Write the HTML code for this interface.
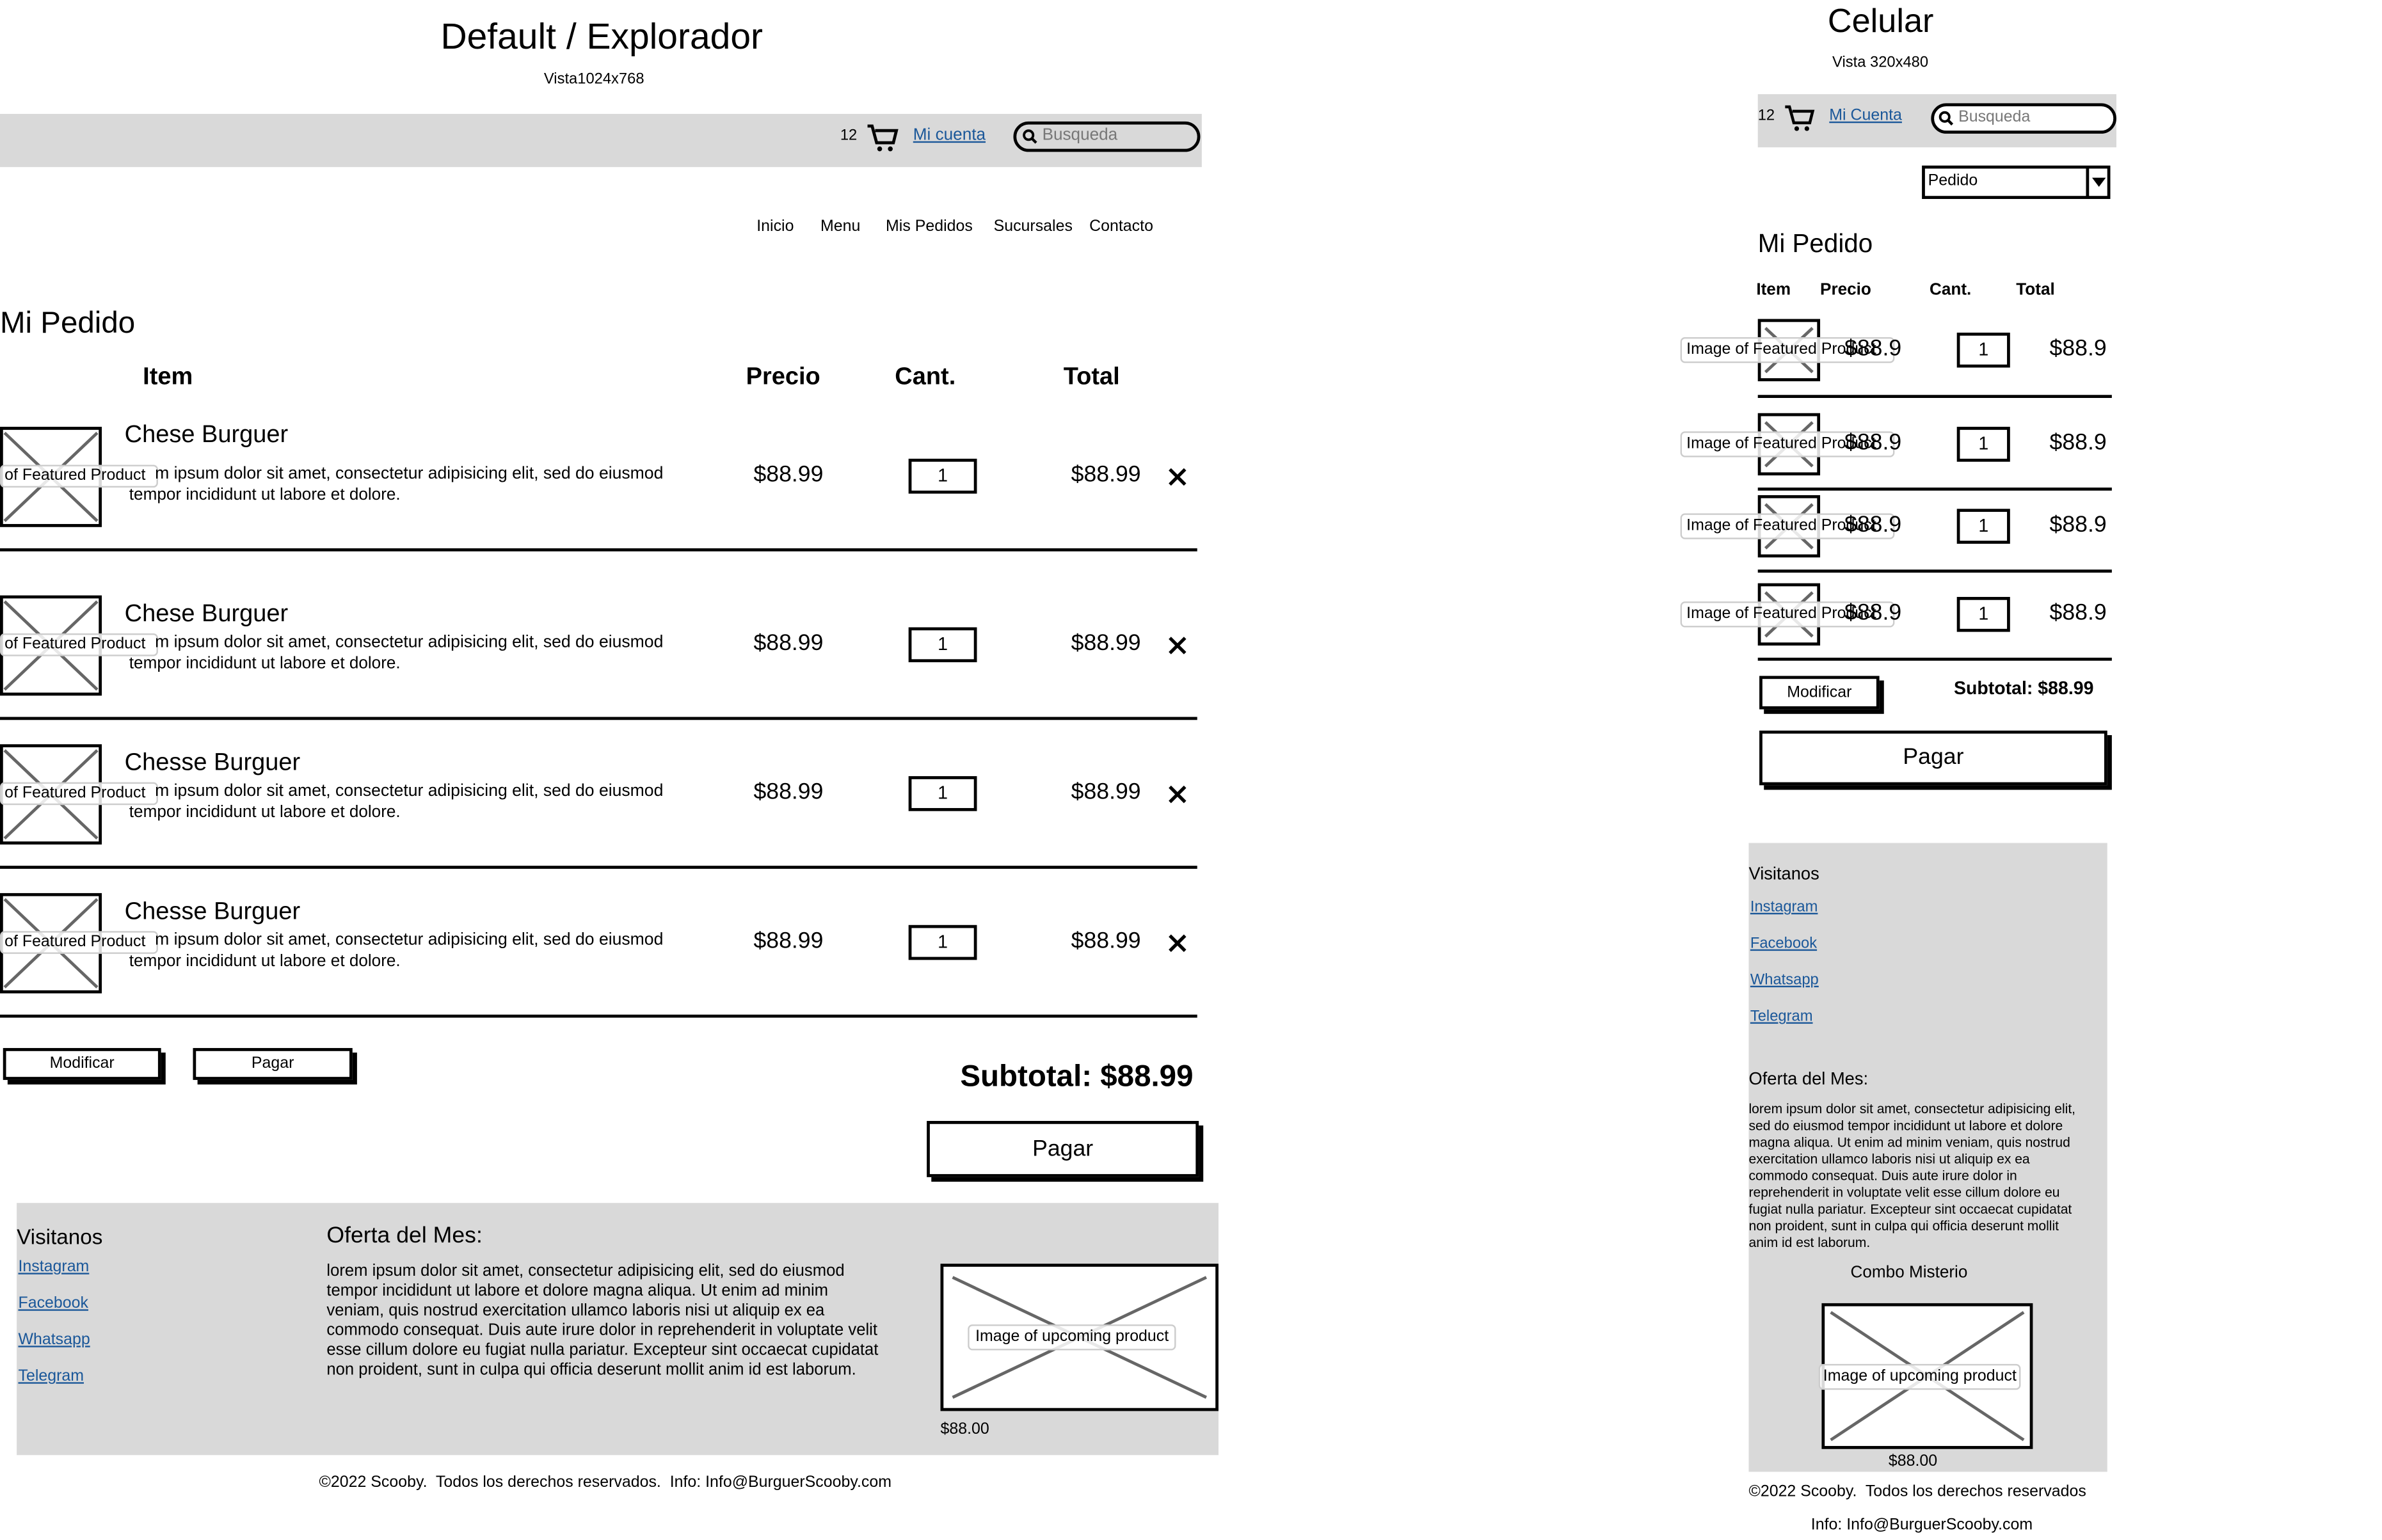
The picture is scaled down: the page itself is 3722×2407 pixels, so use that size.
<!DOCTYPE html>
<html><head><meta charset="utf-8">
<style>
html,body{margin:0;padding:0;background:#fff;width:3722px;height:2406px;overflow:hidden}
#w{position:absolute;left:0;top:0;width:1570px;height:1014px;transform:scale(2.374);transform-origin:0 0;font-family:"Liberation Sans",sans-serif;color:#000}
.a{position:absolute;white-space:nowrap;line-height:1}
.gray{position:absolute;background:#d9d9d9}
.box{position:absolute;border:2px solid #000;box-sizing:border-box;background:#fff}
.btn{position:absolute;border:2px solid #000;box-sizing:border-box;background:#fff;box-shadow:3px 3px 0 #000;text-align:center}
.sep{position:absolute;height:2px;background:#000}
.lnk{color:#1a5799;text-decoration:underline}
.lbl{position:absolute;background:rgba(255,255,255,.85);border:1px solid #ccc;border-radius:3px;white-space:nowrap;line-height:1}
svg{position:absolute;overflow:visible}
</style></head><body><div id="w">

<div class="a" style="left:290px;top:13px;font-size:24px">Default / Explorador</div>
<div class="a" style="left:358px;top:48px;font-size:10px">Vista1024x768</div>
<div class="gray" style="left:0;top:75px;width:791px;height:35px"></div>
<div class="a" style="left:553px;top:85px;font-size:10px">12</div>
<svg style="left:570px;top:81px" width="22" height="20" viewBox="0 0 22 20"><path d="M1 2h3l3 11h11l2-8H6" fill="none" stroke="#000" stroke-width="2"/><circle cx="9" cy="17" r="1.6"/><circle cx="16" cy="17" r="1.6"/></svg>
<div class="a lnk" style="left:601px;top:84px;font-size:11px">Mi cuenta</div>
<div class="a" style="left:667px;top:80px;width:123px;height:20px;border:2px solid #000;border-radius:11px;box-sizing:border-box"></div>
<svg style="left:673px;top:85px" width="10" height="10" viewBox="0 0 10 10"><circle cx="4" cy="4" r="3" fill="none" stroke="#000" stroke-width="1.6"/><path d="M6 6l3 3" stroke="#000" stroke-width="1.8"/></svg>
<div class="a" style="left:686px;top:84px;font-size:11px;color:#777">Busqueda</div>

<div class="a" style="left:498px;top:144px;font-size:10.5px">Inicio</div>
<div class="a" style="left:540px;top:144px;font-size:10.5px">Menu</div>
<div class="a" style="left:583px;top:144px;font-size:10.5px">Mis Pedidos</div>
<div class="a" style="left:654px;top:144px;font-size:10.5px">Sucursales</div>
<div class="a" style="left:717px;top:144px;font-size:10.5px">Contacto</div>

<div class="a" style="left:0;top:203px;font-size:20px">Mi Pedido</div>
<div class="a" style="left:94px;top:241px;font-size:16px;font-weight:bold">Item</div>
<div class="a" style="left:491px;top:241px;font-size:16px;font-weight:bold">Precio</div>
<div class="a" style="left:589px;top:241px;font-size:16px;font-weight:bold">Cant.</div>
<div class="a" style="left:700px;top:241px;font-size:16px;font-weight:bold">Total</div>

<div id="rows"></div>
<script>
var rows=[[281,287,313,361,"Chese Burguer"],[392,405,424,472,"Chese Burguer"],[490,503,522,570,"Chesse Burguer"],[588,601,620,668,"Chesse Burguer"]];
var h='';
rows.forEach(function(r){
 var iy=r[0],ty=r[1],dy=r[2],sy=r[3];
 h+='<div class="box" style="left:0;top:'+iy+'px;width:67px;height:66px"></div>';
 h+='<svg style="left:0;top:'+iy+'px" width="67" height="66"><path d="M3 4L64 62M64 4L3 62" stroke="#666" stroke-width="2"/></svg>';
 h+='<div class="a" style="left:82px;top:'+(ty-8)+'px;font-size:16px">'+r[4]+'</div>';
 h+='<div class="lbl" style="left:0;top:'+(dy-7)+'px;font-size:10.5px;padding:1px 2px;width:98px">of Featured Product</div>';
 h+='<div class="a" style="left:102px;top:'+(dy-6)+'px;font-size:11.2px">m ipsum dolor sit amet, consectetur adipisicing elit, sed do eiusmod</div>';
 h+='<div class="a" style="left:85px;top:'+(dy+8)+'px;font-size:11px">tempor incididunt ut labore et dolore.</div>';
 h+='<div class="a" style="left:496px;top:'+(dy-8)+'px;font-size:15px">$88.99</div>';
 h+='<div class="box" style="left:598px;top:'+(dy-11)+'px;width:45px;height:23px;text-align:center;font-size:12px;line-height:19px">1</div>';
 h+='<div class="a" style="left:705px;top:'+(dy-8)+'px;font-size:15px">$88.99</div>';
 h+='<svg style="left:769px;top:'+(dy-5)+'px" width="12" height="12"><path d="M1 1L11 11M11 1L1 11" stroke="#000" stroke-width="2.2"/></svg>';
 h+='<div class="sep" style="left:0;top:'+sy+'px;width:788px"></div>';
});
document.getElementById('rows').outerHTML=h;
</script>

<div class="btn" style="left:2px;top:690px;width:104px;height:21px;font-size:10.5px;line-height:17px">Modificar</div>
<div class="btn" style="left:127px;top:690px;width:105px;height:21px;font-size:10.5px;line-height:17px">Pagar</div>
<div class="a" style="left:632px;top:699px;font-size:20px;font-weight:bold">Subtotal: $88.99</div>
<div class="btn" style="left:610px;top:738px;width:179px;height:37px;font-size:15px;line-height:33px">Pagar</div>

<div class="gray" style="left:11px;top:792px;width:791px;height:166px"></div>
<div class="a" style="left:11px;top:807px;font-size:14px">Visitanos</div>
<div class="a lnk" style="left:12px;top:829px;font-size:10.5px">Instagram</div>
<div class="a lnk" style="left:12px;top:853px;font-size:10.5px">Facebook</div>
<div class="a lnk" style="left:12px;top:877px;font-size:10.5px">Whatsapp</div>
<div class="a lnk" style="left:12px;top:901px;font-size:10.5px">Telegram</div>
<div class="a" style="left:215px;top:806px;font-size:15px">Oferta del Mes:</div>
<div class="a" style="left:215px;top:831px;font-size:10.8px;line-height:13px">lorem ipsum dolor sit amet, consectetur adipisicing elit, sed do eiusmod<br>tempor incididunt ut labore et dolore magna aliqua. Ut enim ad minim<br>veniam, quis nostrud exercitation ullamco laboris nisi ut aliquip ex ea<br>commodo consequat. Duis aute irure dolor in reprehenderit in voluptate velit<br>esse cillum dolore eu fugiat nulla pariatur. Excepteur sint occaecat cupidatat<br>non proident, sunt in culpa qui officia deserunt mollit anim id est laborum.</div>
<div class="box" style="left:619px;top:832px;width:183px;height:97px"></div>
<svg style="left:619px;top:832px" width="183" height="97"><path d="M8 9L175 88M175 9L8 88" stroke="#666" stroke-width="2"/></svg>
<div class="lbl" style="left:637px;top:872px;font-size:10.5px;padding:2px 4px">Image of upcoming product</div>
<div class="a" style="left:619px;top:936px;font-size:10.5px">$88.00</div>
<div class="a" style="left:210px;top:971px;font-size:10.5px">©2022 Scooby.&nbsp; Todos los derechos reservados.&nbsp; Info: Info@BurguerScooby.com</div>

<div class="a" style="left:1203px;top:3px;font-size:22px">Celular</div>
<div class="a" style="left:1206px;top:37px;font-size:10px">Vista 320x480</div>
<div class="gray" style="left:1157px;top:62px;width:236px;height:35px"></div>
<div class="a" style="left:1157px;top:72px;font-size:10px">12</div>
<svg style="left:1174px;top:68px" width="21" height="20" viewBox="0 0 22 20"><path d="M1 2h3l3 11h11l2-8H6" fill="none" stroke="#000" stroke-width="2"/><circle cx="9" cy="17" r="1.6"/><circle cx="16" cy="17" r="1.6"/></svg>
<div class="a lnk" style="left:1204px;top:71px;font-size:10.5px">Mi Cuenta</div>
<div class="a" style="left:1271px;top:68px;width:122px;height:20px;border:2px solid #000;border-radius:11px;box-sizing:border-box;background:#fff"></div>
<svg style="left:1276px;top:73px" width="10" height="10" viewBox="0 0 10 10"><circle cx="4" cy="4" r="3" fill="none" stroke="#000" stroke-width="1.6"/><path d="M6 6l3 3" stroke="#000" stroke-width="1.8"/></svg>
<div class="a" style="left:1289px;top:72px;font-size:10.5px;color:#777">Busqueda</div>
<div class="box" style="left:1265px;top:109px;width:124px;height:22px"></div>
<div class="a" style="left:1373px;top:110px;width:2px;height:20px;background:#000"></div>
<svg style="left:1377px;top:117px" width="9" height="6"><path d="M0 0h9L4.5 6z"/></svg>
<div class="a" style="left:1269px;top:114px;font-size:10.5px">Pedido</div>

<div class="a" style="left:1157px;top:152px;font-size:17px">Mi Pedido</div>
<div class="a" style="left:1156px;top:186px;font-size:11px;font-weight:bold">Item</div>
<div class="a" style="left:1198px;top:186px;font-size:11px;font-weight:bold">Precio</div>
<div class="a" style="left:1270px;top:186px;font-size:11px;font-weight:bold">Cant.</div>
<div class="a" style="left:1327px;top:186px;font-size:11px;font-weight:bold">Total</div>
<div id="mrows"></div>
<script>
var m=[[230,260],[292,321],[346,375],[404,433]];var g='';
m.forEach(function(r){var c=r[0];
 g+='<div class="box" style="left:1157px;top:'+(c-20)+'px;width:41px;height:41px"></div>';
 g+='<svg style="left:1157px;top:'+(c-20)+'px" width="41" height="41"><path d="M5 6L36 35M36 6L5 35" stroke="#666" stroke-width="2"/></svg>';
 g+='<div class="lbl" style="left:1106px;top:'+(c-8)+'px;font-size:10.5px;padding:2px 3px;width:133px;overflow:hidden">Image of Featured Product</div>';
 g+='<div class="a" style="left:1214px;top:'+(c-8)+'px;font-size:15px">$88.9</div>';
 g+='<div class="box" style="left:1288px;top:'+(c-11)+'px;width:35px;height:23px;text-align:center;font-size:12px;line-height:19px">1</div>';
 g+='<div class="a" style="left:1349px;top:'+(c-8)+'px;font-size:15px">$88.9</div>';
 g+='<div class="sep" style="left:1157px;top:'+r[1]+'px;width:233px"></div>';
});
document.getElementById('mrows').outerHTML=g;
</script>
<div class="btn" style="left:1158px;top:445px;width:79px;height:22px;font-size:10.5px;line-height:18px">Modificar</div>
<div class="a" style="left:1286px;top:447px;font-size:12px;font-weight:bold">Subtotal: $88.99</div>
<div class="btn" style="left:1158px;top:481px;width:229px;height:36px;font-size:15px;line-height:32px">Pagar</div>

<div class="gray" style="left:1151px;top:555px;width:236px;height:414px"></div>
<div class="a" style="left:1151px;top:571px;font-size:11.5px">Visitanos</div>
<div class="a lnk" style="left:1152px;top:593px;font-size:10px">Instagram</div>
<div class="a lnk" style="left:1152px;top:617px;font-size:10px">Facebook</div>
<div class="a lnk" style="left:1152px;top:641px;font-size:10px">Whatsapp</div>
<div class="a lnk" style="left:1152px;top:665px;font-size:10px">Telegram</div>
<div class="a" style="left:1151px;top:706px;font-size:11.5px">Oferta del Mes:</div>
<div class="a" style="left:1151px;top:725px;font-size:8.9px;line-height:11px">lorem ipsum dolor sit amet, consectetur adipisicing elit,<br>sed do eiusmod tempor incididunt ut labore et dolore<br>magna aliqua. Ut enim ad minim veniam, quis nostrud<br>exercitation ullamco laboris nisi ut aliquip ex ea<br>commodo consequat. Duis aute irure dolor in<br>reprehenderit in voluptate velit esse cillum dolore eu<br>fugiat nulla pariatur. Excepteur sint occaecat cupidatat<br>non proident, sunt in culpa qui officia deserunt mollit<br>anim id est laborum.</div>
<div class="a" style="left:1218px;top:833px;font-size:11px">Combo Misterio</div>
<div class="box" style="left:1199px;top:858px;width:139px;height:96px"></div>
<svg style="left:1199px;top:858px" width="139" height="96"><path d="M6 6L133 90M133 6L6 90" stroke="#666" stroke-width="2"/></svg>
<div class="lbl" style="left:1197px;top:898px;font-size:10.5px;padding:2px 2px">Image of upcoming product</div>
<div class="a" style="left:1243px;top:957px;font-size:10.5px">$88.00</div>
<div class="a" style="left:1151px;top:977px;font-size:10.5px">©2022 Scooby.&nbsp; Todos los derechos reservados</div>
<div class="a" style="left:1192px;top:999px;font-size:10.5px">Info: Info@BurguerScooby.com</div>

</div></body></html>
